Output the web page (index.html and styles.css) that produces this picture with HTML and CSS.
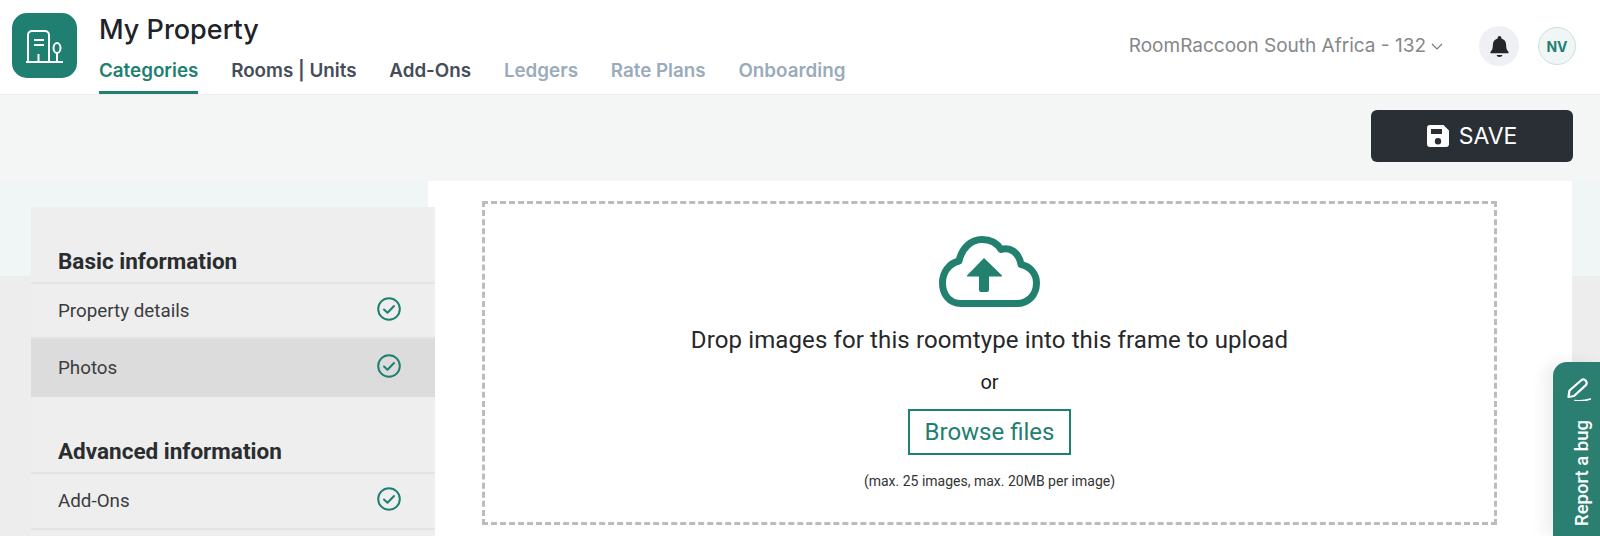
FILE: index.html
```html
<!DOCTYPE html>
<html>
<head>
<meta charset="utf-8">
<title>My Property</title>
<link rel="stylesheet" href="styles.css">
</head>
<body>
<header class="topbar">
    <div class="logo">
        <svg viewBox="0 0 66 66" width="66" height="66" fill="none" stroke="#fff" stroke-width="2">
            <path d="M16 49V22a4 4 0 0 1 4-4h13a4 4 0 0 1 4 4v27"/>
            <path d="M22 27h10M22 32h10M26.500 49v-8"/>
            <path d="M14 49h37"/>
            <ellipse cx="45" cy="35" rx="3.500" ry="5"/>
            <path d="M45 40v9"/>
        </svg>
    </div>
    <div class="titles">
        <h1>My Property</h1>
        <nav class="tabs">
            <a class="tab active">Categories</a>
            <a class="tab">Rooms | Units</a>
            <a class="tab">Add-Ons</a>
            <a class="tab muted">Ledgers</a>
            <a class="tab muted">Rate Plans</a>
            <a class="tab muted">Onboarding</a>
        </nav>
    </div>
    <div class="account">
        <span class="account-name">RoomRaccoon South Africa - 132</span>
        <svg class="chevron" viewBox="0 0 12 8" width="12" height="8" fill="none" stroke="#77797c" stroke-width="1.200">
            <path d="M1 1l5 5 5-5"/>
        </svg>
        <span class="bell">
            <svg viewBox="0 0 20 24" width="19" height="23" fill="#23272c">
                <path d="M10 1a2 2 0 0 1 2 2v.6c3.200.8 5 3.500 5 6.900 0 4 .8 5.500 2.500 7.200.400.500.200 1.300-.6 1.300H1.100c-.8 0-1-.8-.6-1.300C2.200 16 3 14.500 3 10.500c0-3.400 1.800-6.100 5-6.900V3a2 2 0 0 1 2-2z"/>
                <path d="M7 21h6c0 1.200-1.300 2-3 2s-3-.8-3-2z"/>
            </svg>
        </span>
        <span class="avatar">NV</span>
    </div>
</header>

<div class="toolbar">
    <button class="save">
        <svg viewBox="0 0 22 22" width="22" height="22">
            <path fill="#fff" fill-rule="evenodd" d="M3 0h13.500L22 5.500V19a3 3 0 0 1-3 3H3a3 3 0 0 1-3-3V3a3 3 0 0 1 3-3zm1 4v5h11V4H4zm7 9a3.200 3.200 0 1 0 0 6.400A3.200 3.200 0 0 0 11 13z"/>
        </svg>
        SAVE
    </button>
</div>

<main class="content">
    <aside class="sidebar">
        <h2>Basic information</h2>
        <div class="row">
            Property details
            <svg class="check" viewBox="0 0 24 24" width="24" height="24" fill="none" stroke="#1f8072" stroke-width="2">
                <circle cx="12" cy="12" r="10.800"/>
                <path d="M7 12.500l3.500 3.300L17 9" stroke-linecap="round" stroke-linejoin="round"/>
            </svg>
        </div>
        <div class="row selected">
            Photos
            <svg class="check" viewBox="0 0 24 24" width="24" height="24" fill="none" stroke="#1f8072" stroke-width="2">
                <circle cx="12" cy="12" r="10.800"/>
                <path d="M7 12.500l3.500 3.300L17 9" stroke-linecap="round" stroke-linejoin="round"/>
            </svg>
        </div>
        <h2 class="second">Advanced information</h2>
        <div class="row">
            Add-Ons
            <svg class="check" viewBox="0 0 24 24" width="24" height="24" fill="none" stroke="#1f8072" stroke-width="2">
                <circle cx="12" cy="12" r="10.800"/>
                <path d="M7 12.500l3.500 3.300L17 9" stroke-linecap="round" stroke-linejoin="round"/>
            </svg>
        </div>
    </aside>

    <section class="panel">
        <div class="dropzone">
            <svg class="cloud" viewBox="0 0 101 71" width="101" height="71">
                <path fill="none" stroke="#22806f" stroke-width="7" stroke-linejoin="round" d="M22 67.500C10 67.500 3.500 58 3.500 47 3.500 36 10 27.500 20 25 23 12 32 3.500 43 3.500c8 0 15 3.500 19 10 9-3 18 3 20 15 9.500 2 15.500 9.500 15.500 18.500 0 12-8.500 20.500-19.500 20.500z"/>
                <path fill="#22806f" d="M45 22l18 17.500a.6.6 0 0 1-.4 1H50V54a2 2 0 0 1-2 2h-6a2 2 0 0 1-2-2V40.500H28.400a.6.6 0 0 1-.4-1z"/>
            </svg>
            <p class="drop-text">Drop images for this roomtype into this frame to upload</p>
            <p class="or">or</p>
            <button class="browse">Browse files</button>
            <p class="limits">(max. 25 images, max. 20MB per image)</p>
        </div>
    </section>
</main>

<div class="report-bug">
    <svg viewBox="0 0 26 24" width="26" height="24" fill="none" stroke="#fff" stroke-width="2.200">
        <path d="M4.500 13.500L16 3.500c1.500-1.300 3.500-1.200 4.800.2s1.200 3.400-.2 4.700L9 19l-5.500 1z" stroke-linejoin="round"/>
        <path d="M10 23.500c5 .6 10 .3 15.500-1.500" stroke-width="1.600" stroke-linecap="round"/>
    </svg>
    <span class="report-label">Report a bug</span>
</div>
</body>
</html>
```

FILE: styles.css
```css
html, body {
    height: 536px;
    overflow: hidden;
}
body {
    margin: 0;
    font-family: 'Roboto', sans-serif;
    color: #2a2c2e;
    background: #ededed;
}
p {
    margin: 0;
}

/* top bar */
.topbar {
    display: flex;
    height: 95px;
    box-sizing: border-box;
    background: #fff;
    border-bottom: 1px solid #eeeeee;
    font-family: 'Inter', sans-serif;
}
.logo {
    flex: none;
    width: 65px;
    height: 65px;
    margin: 13px 22px 0 12px;
    border-radius: 15px;
    background: #1f8072;
}
.logo svg {
    display: block;
}
.titles {
    display: flex;
    flex-direction: column;
}
h1 {
    margin: 13px 0 0;
    font-size: 27px;
    line-height: 34px;
    font-weight: 500;
    color: #1d2329;
}
.tabs {
    display: flex;
    gap: 32.800px;
    margin-top: 9px;
}
.tab {
    height: 38px;
    line-height: 29px;
    font-size: 18.800px;
    font-weight: 600;
    color: #454d58;
    box-sizing: border-box;
}
.tab.active {
    color: #1f8072;
    border-bottom: 3px solid #1f8072;
}
.tab.muted {
    color: #9aabbb;
}
.account {
    display: flex;
    align-items: center;
    align-self: flex-start;
    height: 40px;
    margin: 26px 24px 0 auto;
}
.account-name {
    position: relative;
    top: -1px;
    font-size: 19px;
    color: #85878a;
}
.chevron {
    margin: 2px 36px 0 5px;
}
.bell {
    display: flex;
    align-items: center;
    justify-content: center;
    width: 40px;
    height: 40px;
    border-radius: 50%;
    background: #eff0f4;
}
.avatar {
    display: flex;
    align-items: center;
    justify-content: center;
    box-sizing: border-box;
    width: 38px;
    height: 38px;
    margin-left: 19px;
    border-radius: 50%;
    border: 1px solid #c9e3dc;
    background: #f0f5f5;
    color: #1f8072;
    font-size: 14px;
    font-weight: 700;
}

/* save bar */
.toolbar {
    display: flex;
    justify-content: flex-end;
    height: 86px;
    padding: 15px 27px 0 0;
    box-sizing: border-box;
    background: #f4f6f5;
}
.save {
    display: flex;
    align-items: center;
    justify-content: center;
    gap: 10px;
    width: 202px;
    height: 52px;
    border: 0;
    border-radius: 6px;
    background: #2a2e35;
    color: #fff;
    font-family: 'Inter', sans-serif;
    font-size: 23px;
}

/* content */
.content {
    display: flex;
    height: 355px;
    padding-left: 31px;
    overflow: hidden;
    background: linear-gradient(#f0f5f5 95px, #ededed 95px);
}
.sidebar {
    position: relative;
    flex: none;
    width: 404px;
    margin-top: 26px;
    background: #eeeeee;
}
h2 {
    height: 77px;
    margin: 0;
    padding: 26px 0 0 27px;
    box-sizing: border-box;
    border-bottom: 2px solid #e3e3e3;
    font-size: 22.500px;
    line-height: 56px;
    font-weight: 700;
    color: #2a2c2e;
}
.row {
    display: flex;
    align-items: center;
    justify-content: space-between;
    height: 55px;
    padding: 0 34px 0 27px;
    box-sizing: border-box;
    border-bottom: 2px solid #e3e3e3;
    font-size: 18.800px;
    color: #3a3c3e;
}
.row.selected {
    height: 58px;
    background: #dcdcdc;
    border-bottom: 0;
}
h2.second + .row {
    height: 56px;
}
.check {
    position: relative;
    top: -2px;
}
.panel {
    flex: none;
    width: 1144px;
    margin-left: -7px;
    padding: 20px 75px 0 54px;
    box-sizing: border-box;
    background: #fff;
}
.dropzone {
    display: flex;
    flex-direction: column;
    align-items: center;
    height: 324px;
    padding-top: 32px;
    box-sizing: border-box;
    border: 3px dashed #bcbcbc;
}
.cloud {
    margin-bottom: 17px;
}
.drop-text {
    font-size: 24px;
    letter-spacing: 0.120px;
    line-height: 32px;
    color: #26282a;
}
.or {
    margin-top: 14px;
    font-size: 20px;
    line-height: 24px;
    color: #1c1c1c;
}
.browse {
    width: 163px;
    height: 46px;
    margin-top: 15px;
    border: 2px solid #1f8072;
    background: #fff;
    color: #1f8072;
    font-family: 'Roboto', sans-serif;
    font-size: 24px;
}
.limits {
    margin-top: 16px;
    font-size: 14px;
    line-height: 20px;
    color: #333;
}

/* report a bug tab */
.report-bug {
    position: absolute;
    top: 362px;
    left: 1553px;
    width: 47px;
    height: 174px;
    padding: 15px 0 0 3px;
    box-sizing: border-box;
    display: flex;
    flex-direction: column;
    align-items: center;
    gap: 19px;
    border-radius: 14px 0 0 0;
    background: #2b7f71;
    box-shadow: -8px 0 16px rgba(0, 0, 0, 0.07);
}
.report-label {
    margin-left: 7px;
    writing-mode: vertical-rl;
    transform: rotate(180deg);
    font-size: 18.500px;
    font-weight: 500;
    color: #fff;
}
```
